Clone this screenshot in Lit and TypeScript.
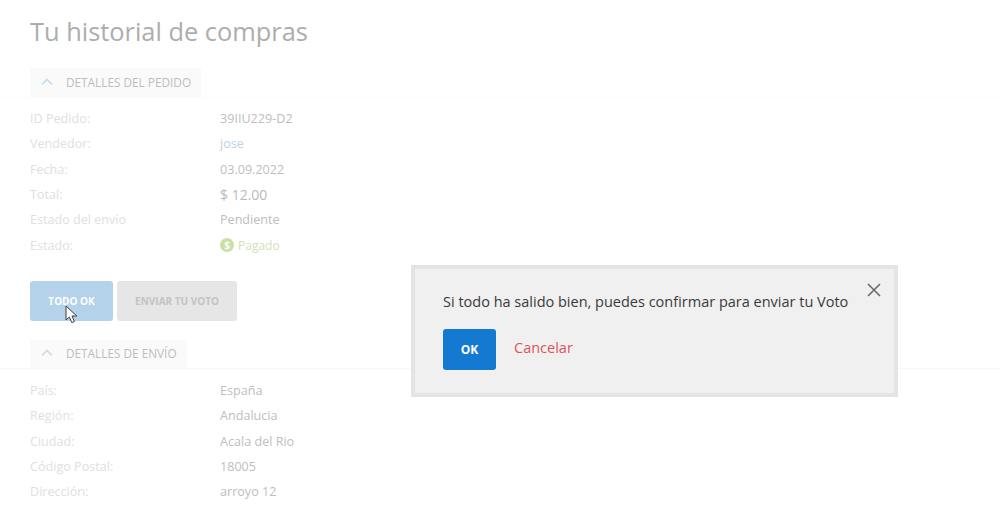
import { LitElement, html, css } from "lit";
import { customElement } from "lit/decorators.js";

const order: [string, string, string?][] = [
  ["ID Pedido:", "39IIU229-D2"],
  ["Vendedor:", "jose", "link"],
  ["Fecha:", "03.09.2022"],
  ["Total:", "$ 12.00", "total"],
  ["Estado del envío", "Pendiente"],
  ["Estado:", "Pagado", "paid"],
];
const ship: [string, string][] = [
  ["País:", "España"],
  ["Región:", "Andalucia"],
  ["Ciudad:", "Acala del Rio"],
  ["Código Postal:", "18005"],
  ["Dirección:", "arroyo 12"],
];

@customElement("app-root")
export class AppRoot extends LitElement {
  static styles = css`
    :host { display: block; position: relative; width: 1000px; height: 516px; overflow: hidden; background: #fff; font-family: "Open Sans", sans-serif; }
    .page { padding: 14px 0 0; }
    h1 { margin: 0 0 0 30px; font-size: 25.4px; line-height: 34px; font-weight: 400; color: #adadad; }
    .tabline { margin-top: 20px; border-bottom: 1px solid #fcfcfc; padding-left: 30px; display: flex; }
    .tabline.second { margin-top: 19px; border-bottom-color: #f7f7f7; }
    .tab { height: 29px; background: #fafafa; display: flex; align-items: center; gap: 13px; padding: 0 10px 1px 11px; font-size: 11.8px; color: #bdbdbd; box-sizing: border-box; }
    .second .tab { height: 28px; }
    .tab svg { width: 12px; height: 8px; display: block; }
    .rows { display: grid; grid-template-columns: 190px 1fr; padding: 8px 0 0 30px; grid-auto-rows: 25.3px; align-items: center; font-size: 12.6px; }
    .second + .rows { padding-top: 9px; }
    .k { color: #e0e0e0; }
    .v { color: #bebebe; }
    .v.link { color: #bdd3e6; }
    .v.total { font-size: 14px; color: #bababa; }
    .v.paid { color: #d3e0b8; display: flex; align-items: center; gap: 4px; font-size: 12px; }
    .dot { width: 14px; height: 14px; border-radius: 50%; background: #c9dfa4; color: #fff; font-size: 10px; font-weight: 700; display: flex; align-items: center; justify-content: center; }
    .buttons { display: flex; gap: 4px; padding: 23px 0 0 30px; }
    .btn { height: 40px; border-radius: 3px; display: flex; align-items: center; justify-content: center; font-size: 10px; font-weight: 700; position: relative; box-sizing: border-box; }
    .btn.ok { width: 83px; background: #b4d2ea; color: #fff; }
    .btn.send { width: 120px; background: #e6e6e6; color: #c3c3c3; }
    .cursor { position: absolute; left: 35px; top: 24px; width: 14px; height: 19px; }
    .modal { position: absolute; left: 411px; top: 265px; width: 487px; height: 132px; box-sizing: border-box; background: #f0f0f0; border: 4px solid #e4e4e4; padding: 22px 28px 0; }
    .modal p { margin: 0; font-size: 14.5px; line-height: 22px; color: #3a3a3a; }
    .actions { display: flex; align-items: flex-start; gap: 18px; margin-top: 16px; }
    .okbtn { width: 53px; height: 41px; border-radius: 3px; background: #1479d1; color: #fff; font-size: 12px; font-weight: 700; display: flex; align-items: center; justify-content: center; }
    .cancel { color: #d9565a; font-size: 14.5px; line-height: 38px; }
    .close { position: absolute; right: 13px; top: 14px; width: 14px; height: 14px; display: block; }
  `;

  private chevron() {
    return html`<svg viewBox="0 0 12 8" fill="none" stroke="#c4dcee" stroke-width="1.6"><path d="M1 6.5 6 1.5 11 6.5"/></svg>`;
  }

  private row(r: [string, string, string?]) {
    const cls = r[2] ?? "";
    return html`<div class="k">${r[0]}</div>
      <div class="v ${cls}">${cls === "paid" ? html`<span class="dot">$</span>` : ""}${r[1]}</div>`;
  }

  render() {
    return html`
      <div class="page">
        <h1>Tu historial de compras</h1>
        <div class="tabline"><div class="tab">${this.chevron()}<span>DETALLES DEL PEDIDO</span></div></div>
        <div class="rows">${order.map((r) => this.row(r))}</div>
        <div class="buttons">
          <div class="btn ok">TODO OK
            <svg class="cursor" viewBox="0 0 14 19"><path d="M1 1V15L4.4 12 6.8 17.6 9.4 16.4 7 11H11.8Z" fill="#fff" stroke="#3c3c3c" stroke-width="1"/></svg>
          </div>
          <div class="btn send">ENVIAR TU VOTO</div>
        </div>
        <div class="tabline second"><div class="tab">${this.chevron()}<span>DETALLES DE ENVÍO</span></div></div>
        <div class="rows">${ship.map((r) => this.row(r))}</div>
      </div>
      <div class="modal">
        <p>Si todo ha salido bien, puedes confirmar para enviar tu Voto</p>
        <svg class="close" viewBox="0 0 14 14" fill="none" stroke="#6a6a6a" stroke-width="1.6"><path d="M1 1 13 13M13 1 1 13"/></svg>
        <div class="actions">
          <div class="okbtn">OK</div>
          <div class="cancel">Cancelar</div>
        </div>
      </div>
    `;
  }
}
